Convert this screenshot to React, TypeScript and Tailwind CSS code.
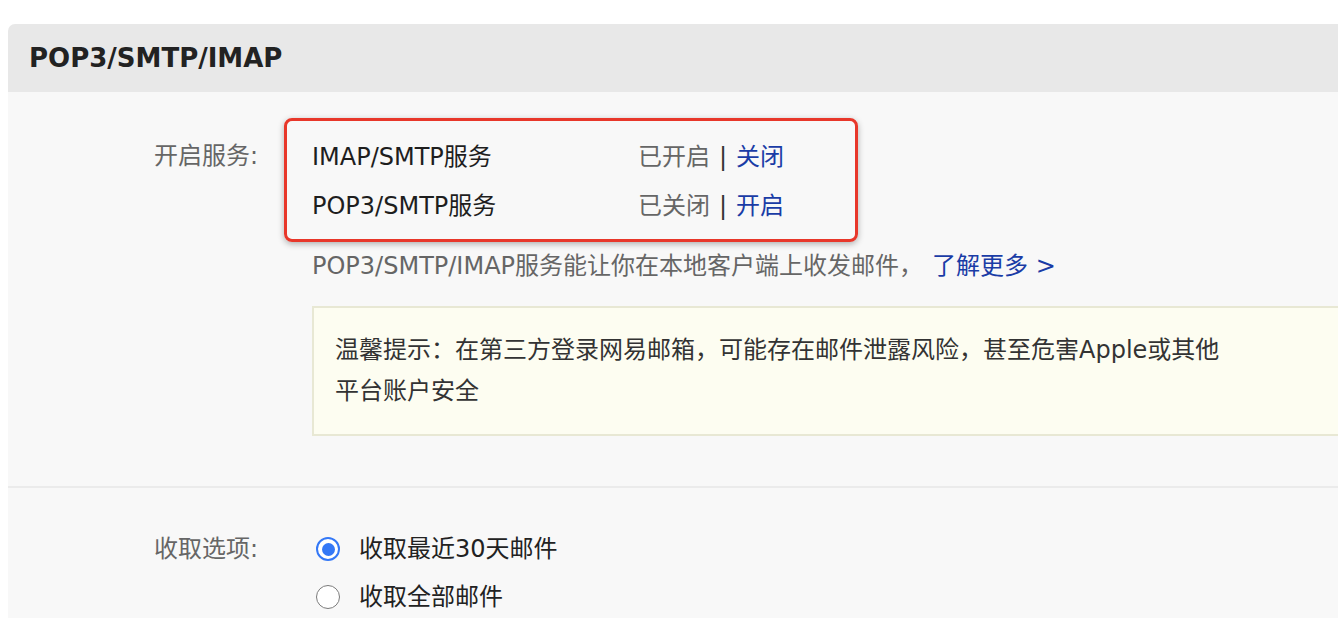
const font = { fontFamily: '"DejaVu Sans", "Noto Sans CJK SC", sans-serif' };

function Radio({ checked, label }: { checked?: boolean; label: string }) {
  return (
    <label className="flex items-center h-[48px] cursor-pointer">
      <span className="ml-[4px] mr-[19px] flex items-center justify-center w-[24px] h-[24px] rounded-full bg-white">
        {checked ? (
          <span className="w-[24px] h-[24px] rounded-full border-[2.5px] border-[#3478f6] flex items-center justify-center">
            <span className="w-[13px] h-[13px] rounded-full bg-[#3478f6]" />
          </span>
        ) : (
          <span className="w-[24px] h-[24px] rounded-full border-[1.5px] border-[#7a7a7a]" />
        )}
      </span>
      <span className="text-[#222]">{label}</span>
    </label>
  );
}

function ServiceRow({ name, status, action }: { name: string; status: string; action: string }) {
  return (
    <div className="flex h-[49px] items-center">
      <span className="w-[326px] text-[#1e1e1e]">{name}</span>
      <span className="text-[#666]">{status}</span>
      <span className="mx-[9px] text-[#333]">|</span>
      <a className="text-[#1a3ca6] cursor-pointer">{action}</a>
    </div>
  );
}

export default function App() {
  return (
    <div className="min-h-screen bg-white pt-[24px] pl-[8px] overflow-hidden text-[24px]" style={font}>
      <div className="rounded-tl-[7px] overflow-hidden">
        <div className="h-[68px] bg-[#e8e8e8] flex items-center pl-[21px]">
          <h2 className="text-[26px] font-bold text-[#222]">POP3/SMTP/IMAP</h2>
        </div>

        <div className="bg-[#f8f8f8] pb-[30px]">
          <div className="flex gap-[54px] pt-[26px]">
            <div className="w-[250px] shrink-0 text-right pt-[14px] leading-[49px] text-[#666]">开启服务:</div>
            <div className="flex-1 flex flex-col">
              <div className="-ml-[28px] w-[574px] border-[3px] border-[#e8372a] rounded-[8px] pl-[25px] pt-[11px] pb-[9px] shadow-[0_2px_6px_rgba(0,0,0,0.3)]">
                <ServiceRow name="IMAP/SMTP服务" status="已开启" action="关闭" />
                <ServiceRow name="POP3/SMTP服务" status="已关闭" action="开启" />
              </div>
              <p className="mt-[4px] leading-[40px] text-[#666]">
                POP3/SMTP/IMAP服务能让你在本地客户端上收发邮件，
                <a className="ml-[9px] text-[#1a3ca6] cursor-pointer">了解更多 &gt;</a>
              </p>
              <div className="mt-[20px] border-[2px] border-r-0 border-[#e8e8d4] bg-[#fdfdf1] pl-[21px] pt-[22px] pb-[22px] pr-[100px] leading-[41px] text-[#333]">
                <p>温馨提示：在第三方登录网易邮箱，可能存在邮件泄露风险，甚至危害Apple或其他</p>
                <p>平台账户安全</p>
              </div>
            </div>
          </div>

          <div className="mt-[50px] h-[2px] bg-[#ebebeb]" />

          <div className="flex gap-[54px] pt-[37px]">
            <div className="w-[250px] shrink-0 text-right leading-[48px] text-[#666]">收取选项:</div>
            <div className="flex flex-col">
              <Radio checked label="收取最近30天邮件" />
              <Radio label="收取全部邮件" />
            </div>
          </div>
        </div>
      </div>
    </div>
  );
}
